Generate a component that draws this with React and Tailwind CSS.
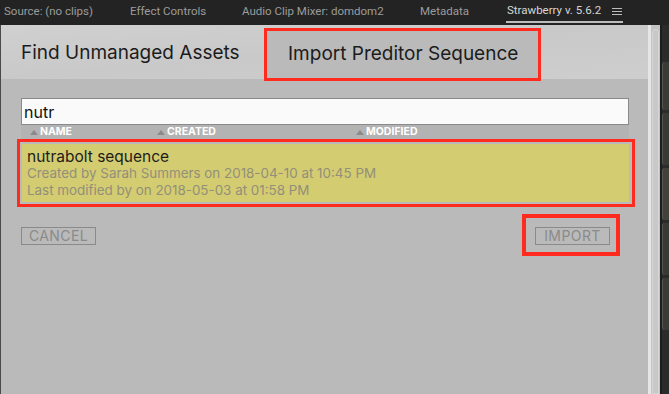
const TABS = [
  { label: 'Source: (no clips)', w: 'w-[126px]' },
  { label: 'Effect Controls', w: 'w-[112px]' },
  { label: 'Audio Clip Mixer: domdom2', w: 'w-[178px]' },
  { label: 'Metadata', w: 'w-[86px]' },
];

const COLUMNS = [
  { label: 'NAME', w: 'w-[127px]' },
  { label: 'CREATED', w: 'w-[199px]' },
  { label: 'MODIFIED', w: 'w-auto' },
];

function SortArrow() {
  return (
    <svg width="8" height="6" viewBox="0 0 8 6" className="mr-[2px]">
      <path d="M0 6 L4 1 L8 6 Z" fill="#8a8a8a" />
    </svg>
  );
}

function MenuIcon() {
  return (
    <svg width="10" height="9" viewBox="0 0 10 9">
      <path d="M0 1.5 H10 M0 4.5 H10 M0 7.5 H10" stroke="#bdbdbd" strokeWidth="1" />
    </svg>
  );
}

export default function App() {
  return (
    <div className="w-[669px] h-[394px] bg-[#262626] flex flex-col overflow-hidden font-['Inter',sans-serif]">
      {/* panel tabs */}
      <div className="h-[25px] flex items-start bg-[#232323] font-['Roboto',sans-serif] text-[11.5px] text-[#9c9c9c] shrink-0">
        {TABS.map((t) => (
          <div key={t.label} className={`${t.w} h-[23px] pl-[4px] flex items-center`}>
            {t.label}
          </div>
        ))}
        <div className="flex items-center pl-[4px]">
          <div className="flex items-center gap-[11px] border-b-2 border-[#bdbdbd] h-[23px] pt-[1px] px-[1px]">
            <span className="text-[#d6d6d6]">Strawberry v. 5.6.2</span>
            <MenuIcon />
          </div>
        </div>
      </div>

      <div className="flex flex-1 min-h-0">
        {/* panel */}
        <div className="w-[648px] bg-[#bababa] border-l border-[#4a4a4a] flex flex-col">
          <div className="h-[54px] bg-gradient-to-br from-[#d0d0d0] via-[#c9c9c9] to-[#cecece] flex items-start pt-[3px] text-[19px] text-[#1c1c1c] shrink-0">
            <div className="w-[263px] h-[51px] pl-[20px] flex items-center">Find Unmanaged Assets</div>
            <div className="w-[277px] h-[53px] -mb-[2px] border-[3px] border-[#ff2b1f] bg-[#bababa] pl-[21px] flex items-center relative z-10">
              Import Preditor Sequence
            </div>
          </div>

          <div className="pl-[20px] pr-[19px] pt-[19px] flex flex-col">
            <div className="h-[27px] bg-[#fafafa] border border-[#8a8a8a] pl-[2px] flex items-center text-[16px] text-[#111]">
              nutr
            </div>

            <div className="h-[14px] bg-[#b3b3b3] flex items-center pl-[9px] text-[10.5px] font-bold text-white leading-none">
              {COLUMNS.map((c) => (
                <div key={c.label} className={`${c.w} flex items-center`}>
                  <SortArrow />
                  {c.label}
                </div>
              ))}
            </div>

            <div className="-ml-[4px] -mr-[6px] h-[68px] border-[3px] border-[#ff2b1f] p-[2px] pr-[3px]">
              <div className="h-full bg-[#d4cc71] pl-[5px] pt-[3px] flex flex-col">
                <div className="text-[15.5px] text-[#1c1c1c] h-[19px] flex items-center">nutrabolt sequence</div>
                <div className="text-[13.4px] text-[#928f7a] h-[15px] flex items-center">
                  Created by Sarah Summers on 2018-04-10 at 10:45 PM
                </div>
                <div className="text-[13.4px] text-[#928f7a] h-[18px] flex items-center">
                  Last modified by on 2018-05-03 at 01:58 PM
                </div>
              </div>
            </div>

            <div className="flex justify-between items-start mt-[7px]">
              <button className="mt-[13px] h-[18px] w-[75px] border border-[#8a8a8a] text-[14px] tracking-[0.03em] text-[#8a8a8a] flex items-center justify-center leading-none">
                CANCEL
              </button>
              <div className="mr-[9px] w-[98px] h-[42px] border-[4px] border-[#ff2b1f] flex items-start justify-start pl-[9px] pt-[9px]">
                <button className="h-[18px] w-[75px] border border-[#8a8a8a] text-[14px] tracking-[0.03em] text-[#8a8a8a] flex items-center justify-center leading-none">
                  IMPORT
                </button>
              </div>
            </div>
          </div>
        </div>

        {/* scrollbar and background */}
        <div className="w-[3px] bg-[#e6e6e6]" />
        <div className="w-[9px] bg-[#c3c3c3] pt-[4px] px-[1px]">
          <div className="h-full rounded-t-full bg-[#c8c8c8] border border-[#d6d6d6]" />
        </div>
        <div className="w-[2px] bg-[#1e1e1e]" />
        <div className="flex-1 bg-[#2b2b2b] flex flex-col gap-[3px] pt-[37px]">
          <div className="h-[48px] rounded-l-[3px] bg-[#3b3b36] border-l border-[#555]" />
          <div className="h-[52px] rounded-l-[3px] bg-[#3a3a35] border-l border-[#555]" />
          <div className="h-[52px] rounded-l-[3px] bg-[#42423a] border-l border-[#555]" />
          <div className="h-[52px] rounded-l-[3px] bg-[#3a3a35] border-l border-[#555]" />
          <div className="h-[52px] rounded-l-[3px] bg-[#3b3b36] border-l border-[#555]" />
        </div>
      </div>
    </div>
  );
}
